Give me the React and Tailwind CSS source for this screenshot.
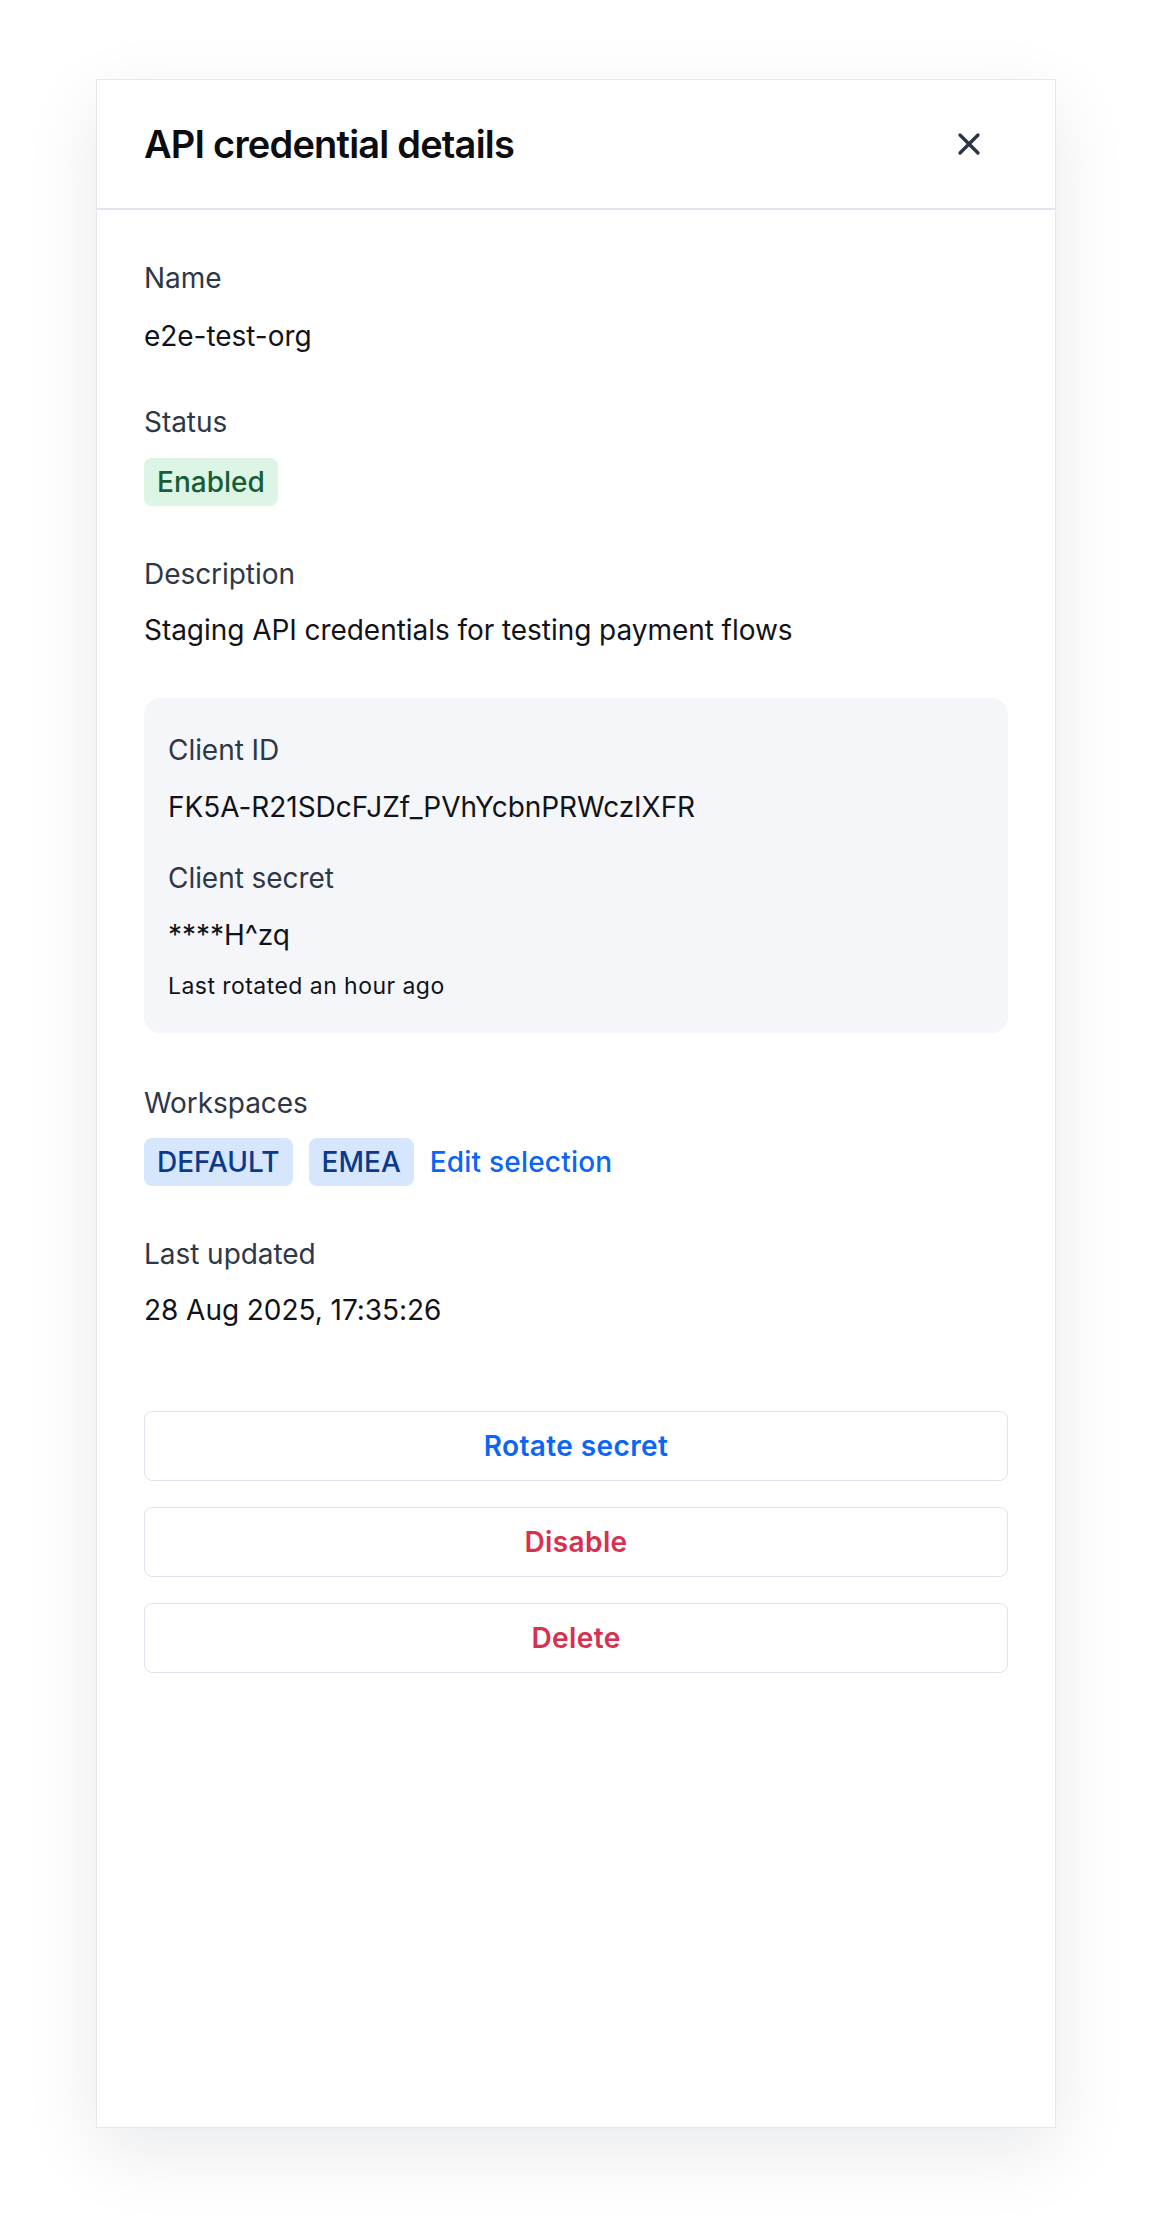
import React from "react";

function XIcon() {
  return (
    <svg width="36" height="36" viewBox="0 0 24 24" fill="none" stroke="#2a3446" strokeWidth="2.2" strokeLinecap="round" strokeLinejoin="round">
      <path d="M18 6 6 18" />
      <path d="m6 6 12 12" />
    </svg>
  );
}

function Label({ children, className = "" }) {
  return <div className={"text-[28px] leading-[40px] tracking-[-0.05px] text-[#2d3748] " + className}>{children}</div>;
}

function Value({ children, className = "" }) {
  return <div className={"text-[28px] leading-[40px] tracking-[-0.05px] text-[#111318] " + className}>{children}</div>;
}

export default function App() {
  return (
    <div
      className="min-h-[2240px] bg-white pt-[79px] pl-[96px]"
      style={{ fontFamily: "Inter, 'Noto Sans', 'Liberation Sans', sans-serif" }}
    >
      <div className="w-[960px] h-[2049px] bg-white border border-[#e8e8ec] shadow-[0_24px_70px_rgba(15,23,42,0.09)] flex flex-col">
        <div className="h-[130px] shrink-0 border-b-2 border-[#e1e5ee] pl-[47px] pr-[47px] flex items-center justify-between">
          <h1 className="text-[38px] leading-[48px] font-semibold text-[#0c0d10] tracking-[-0.8px]">API credential details</h1>
          <button className="w-[36px] h-[36px] mr-[21px] flex items-center justify-center">
            <XIcon />
          </button>
        </div>

        <div className="px-[47px] pt-[48px] flex flex-col">
          <Label>Name</Label>
          <Value className="mt-[18px]">e2e-test-org</Value>

          <Label className="mt-[46px]">Status</Label>
          <div className="mt-[16px] flex">
            <span className="h-[48px] px-[13px] rounded-[8px] bg-[#dcf5e5] text-[#1a5c37] text-[28px] font-medium flex items-center">
              Enabled
            </span>
          </div>

          <Label className="mt-[48px]">Description</Label>
          <Value className="mt-[16px]">Staging API credentials for testing payment flows</Value>

          <div className="mt-[48px] rounded-[16px] bg-[#f5f6fa] px-[24px] pt-[32px] pb-[31px] flex flex-col">
            <Label>Client ID</Label>
            <Value className="mt-[17px]">FK5A-R21SDcFJZf_PVhYcbnPRWczIXFR</Value>
            <Label className="mt-[31px]">Client secret</Label>
            <Value className="mt-[17px]">****H^zq</Value>
            <div className="mt-[15px] text-[23px] leading-[32px] tracking-[0.45px] text-[#111318]">Last rotated an hour ago</div>
          </div>

          <Label className="mt-[50px]">Workspaces</Label>
          <div className="mt-[15px] flex items-center gap-[16px]">
            <span className="h-[48px] px-[13px] rounded-[8px] bg-[#d6e6fd] text-[#0b3a8d] text-[28px] font-medium flex items-center">
              DEFAULT
            </span>
            <span className="h-[48px] px-[13px] rounded-[8px] bg-[#d6e6fd] text-[#0b3a8d] text-[28px] font-medium flex items-center">
              EMEA
            </span>
            <button className="text-[28px] font-medium tracking-[0.2px] text-[#0b66f5] leading-[48px]">Edit selection</button>
          </div>

          <Label className="mt-[48px]">Last updated</Label>
          <Value className="mt-[16px]">28 Aug 2025, 17:35:26</Value>

          <div className="mt-[81px] flex flex-col gap-[26px]">
            <button className="h-[70px] w-full rounded-[8px] border-[1.5px] border-[#dfe3ed] bg-white text-[28px] font-semibold tracking-[0.4px] text-[#0b66f5]">
              Rotate secret
            </button>
            <button className="h-[70px] w-full rounded-[8px] border-[1.5px] border-[#dfe3ed] bg-white text-[28px] font-semibold tracking-[0.4px] text-[#d63150]">
              Disable
            </button>
            <button className="h-[70px] w-full rounded-[8px] border-[1.5px] border-[#dfe3ed] bg-white text-[28px] font-semibold tracking-[0.4px] text-[#d63150]">
              Delete
            </button>
          </div>
        </div>
      </div>
    </div>
  );
}
